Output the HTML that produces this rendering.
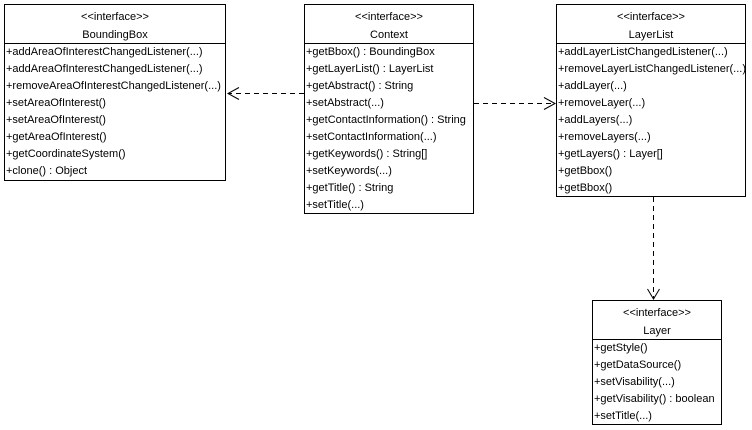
<!DOCTYPE html><html><head><style>body{margin:0;background:#fff;}svg{display:block}text{font-family:"Liberation Sans",sans-serif;font-size:11px;fill:#000}</style></head><body>
<svg width="752" height="430" xmlns="http://www.w3.org/2000/svg">
<g fill="none" stroke="#000" stroke-width="1" shape-rendering="crispEdges">
<rect x="4.5" y="4.5" width="221" height="176"/><line x1="4" y1="43.5" x2="226" y2="43.5"/>
<rect x="304.5" y="4.5" width="169" height="209"/><line x1="304" y1="43.5" x2="474" y2="43.5"/>
<rect x="556.5" y="4.5" width="189" height="192"/><line x1="556" y1="43.5" x2="746" y2="43.5"/>
<rect x="592.5" y="300.5" width="129" height="124"/><line x1="592" y1="339.5" x2="722" y2="339.5"/>
</g>
<g fill="none" stroke="#000" stroke-width="1">
<line x1="304" y1="93.5" x2="229" y2="93.5" stroke-dasharray="5,4"/>
<polyline points="239,87.5 228,93.5 239,99.5"/>
<line x1="474" y1="103.5" x2="554" y2="103.5" stroke-dasharray="5,4"/>
<polyline points="544,97.5 555,103.5 544,109.5"/>
<line x1="653.5" y1="197" x2="653.5" y2="298" stroke-dasharray="5,4"/>
<polyline points="647.5,289 653.5,299 659.5,289"/>
</g>
<g text-anchor="middle">
<text x="115" y="20">&lt;&lt;interface&gt;&gt;</text><text x="115" y="38">BoundingBox</text>
<text x="389" y="20">&lt;&lt;interface&gt;&gt;</text><text x="389" y="38">Context</text>
<text x="651" y="20">&lt;&lt;interface&gt;&gt;</text><text x="651" y="38">LayerList</text>
<text x="657" y="316">&lt;&lt;interface&gt;&gt;</text><text x="657" y="334">Layer</text>
</g>
<g>
<text x="6" y="55">+addAreaOfInterestChangedListener(...)</text>
<text x="6" y="72">+addAreaOfInterestChangedListener(...)</text>
<text x="6" y="89">+removeAreaOfInterestChangedListener(...)</text>
<text x="6" y="106">+setAreaOfInterest()</text>
<text x="6" y="123">+setAreaOfInterest()</text>
<text x="6" y="140">+getAreaOfInterest()</text>
<text x="6" y="157">+getCoordinateSystem()</text>
<text x="6" y="174">+clone() : Object</text>

<text x="306" y="55">+getBbox() : BoundingBox</text>
<text x="306" y="72">+getLayerList() : LayerList</text>
<text x="306" y="89">+getAbstract() : String</text>
<text x="306" y="106">+setAbstract(...)</text>
<text x="306" y="123">+getContactInformation() : String</text>
<text x="306" y="140">+setContactInformation(...)</text>
<text x="306" y="157">+getKeywords() : String[]</text>
<text x="306" y="174">+setKeywords(...)</text>
<text x="306" y="191">+getTitle() : String</text>
<text x="306" y="208">+setTitle(...)</text>

<text x="558" y="55">+addLayerListChangedListener(...)</text>
<text x="558" y="72">+removeLayerListChangedListener(...)</text>
<text x="558" y="89">+addLayer(...)</text>
<text x="558" y="106">+removeLayer(...)</text>
<text x="558" y="123">+addLayers(...)</text>
<text x="558" y="140">+removeLayers(...)</text>
<text x="558" y="157">+getLayers() : Layer[]</text>
<text x="558" y="174">+getBbox()</text>
<text x="558" y="191">+getBbox()</text>

<text x="594" y="351">+getStyle()</text>
<text x="594" y="368">+getDataSource()</text>
<text x="594" y="385">+setVisability(...)</text>
<text x="594" y="402">+getVisability() : boolean</text>
<text x="594" y="419">+setTitle(...)</text>
</g>
</svg>
</body></html>
